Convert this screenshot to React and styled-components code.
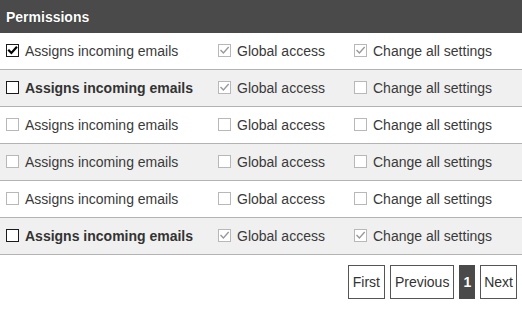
import styled, { createGlobalStyle } from "styled-components";

const GlobalStyle = createGlobalStyle`
  html, body {
    margin: 0;
    padding: 0;
    background: #fff;
  }
  body {
    font-family: "Liberation Sans", Arial, sans-serif;
    font-size: 14px;
    color: #333;
  }
`;

const Panel = styled.div`
  width: 522px;
`;

const Header = styled.div`
  height: 33px;
  background: #4a4a4a;
  color: #fff;
  font-weight: bold;
  font-size: 14px;
  display: flex;
  align-items: center;
  padding-left: 6px;
  text-shadow: 0 0 1px rgba(0, 0, 0, 0.5);
`;

const Row = styled.div`
  height: 36px;
  display: grid;
  grid-template-columns: 212px 136px 1fr;
  align-items: center;
  padding-left: 6px;
  background: ${(p) => (p.$alt ? "#f0f0f0" : "#fff")};
  border-bottom: 1px solid #b3b3b3;
`;

const Cell = styled.label`
  display: flex;
  align-items: center;
  gap: 6px;
  font-weight: ${(p) => (p.$bold ? "bold" : "normal")};
  color: ${(p) => (p.$bold ? "#333" : "#3a3a3a")};
  white-space: nowrap;
`;

const Box = styled.span`
  width: 11px;
  height: 11px;
  flex-shrink: 0;
  border: 1px solid ${(p) => (p.$tone === "dark" ? "#1a1a1a" : "#b8b8b8")};
  background: #fff;
  display: flex;
  align-items: center;
  justify-content: center;
  margin-top: -1px;
`;

const Check = ({ color, heavy }) => (
  <svg width="11" height="11" viewBox="0 0 11 11">
    <path
      d="M2 5.5 L4.4 8 L9.2 2.6"
      fill="none"
      stroke={color}
      strokeWidth={heavy ? 2.2 : 1.4}
      strokeLinecap="square"
    />
  </svg>
);

const Checkbox = ({ checked, enabled }) => (
  <Box $tone={enabled ? "dark" : "light"}>
    {checked && <Check color={enabled ? "#000" : "#999"} heavy={enabled} />}
  </Box>
);

const Pager = styled.div`
  display: flex;
  justify-content: flex-end;
  gap: 5px;
  padding: 10px 5px 0 0;
`;

const PageButton = styled.span`
  height: 32px;
  display: flex;
  align-items: center;
  padding: 0 ${(p) => p.$pad ?? 4}px;
  border: 1px solid ${(p) => (p.$active ? "#4a4a4a" : "#555")};
  background: ${(p) => (p.$active ? "#4a4a4a" : "#fff")};
  color: ${(p) => (p.$active ? "#fff" : "#333")};
  font-weight: ${(p) => (p.$active ? "bold" : "normal")};
  font-size: 14px;
`;

const rows = [
  { bold: false, c: [[true, true], [true, false], [true, false]] },
  { bold: true, c: [[false, true], [true, false], [false, false]] },
  { bold: false, c: [[false, false], [false, false], [false, false]] },
  { bold: false, c: [[false, false], [false, false], [false, false]] },
  { bold: false, c: [[false, false], [false, false], [false, false]] },
  { bold: true, c: [[false, true], [true, false], [true, false]] },
];

const labels = ["Assigns incoming emails", "Global access", "Change all settings"];

export default function App() {
  return (
    <>
      <GlobalStyle />
      <Panel>
        <Header>Permissions</Header>
        {rows.map((r, i) => (
          <Row key={i} $alt={i % 2 === 1}>
            {r.c.map(([checked, enabled], j) => (
              <Cell key={j} $bold={r.bold && j === 0}>
                <Checkbox checked={checked} enabled={enabled} />
                {labels[j]}
              </Cell>
            ))}
          </Row>
        ))}
        <Pager>
          <PageButton>First</PageButton>
          <PageButton>Previous</PageButton>
          <PageButton $active $pad={3}>1</PageButton>
          <PageButton $pad={3}>Next</PageButton>
        </Pager>
      </Panel>
    </>
  );
}
